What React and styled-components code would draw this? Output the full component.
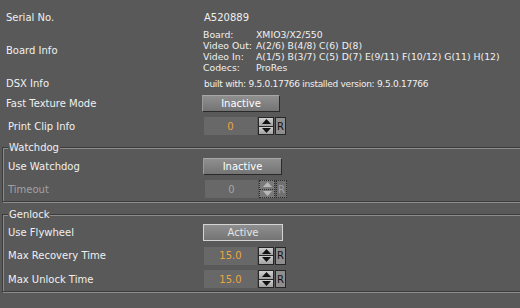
import React from 'react'
import styled, { createGlobalStyle } from 'styled-components'

const Global = createGlobalStyle`
  body {
    margin: 0;
    background: #595959;
  }
`

const Page = styled.div`
  width: 520px;
  height: 308px;
  overflow: hidden;
  background: #595959;
  font-family: "DejaVu Sans", Verdana, sans-serif;
  font-size: 10px;
  color: #f0f0f0;
  padding-top: 6px;
  box-sizing: border-box;
`

const Row = styled.div`
  display: grid;
  grid-template-columns: ${({ $labelW }) => $labelW}px auto;
  align-items: center;
  height: ${({ $h }) => $h}px;
  padding-left: ${({ $indent }) => $indent || 0}px;
`

const Label = styled.div`
  white-space: nowrap;
  color: ${({ $disabled }) => ($disabled ? '#a2a2a2' : '#f0f0f0')};
`

const Value = styled.div`
  margin-left: ${({ $ml }) => $ml || 0}px;
  font-size: ${({ $fs }) => $fs || 10}px;
  letter-spacing: ${({ $ls }) => $ls || 0}px;
  white-space: nowrap;
`

const InfoGrid = styled.div`
  display: grid;
  grid-template-columns: 53px auto;
  font-size: 9.3px;
  line-height: 11px;
  white-space: nowrap;
  margin-left: 1px;
`

const Group = styled.div`
  position: relative;
  margin-left: 2px;
  margin-top: ${({ $mt }) => $mt}px;
  width: 530px;
  box-sizing: border-box;
  border: 1px solid #3c3c3c;
  box-shadow: inset 1px 1px 0 #8c8c8c, 1px 1px 0 #8c8c8c;
  padding: ${({ $pt }) => $pt}px 0 ${({ $pb }) => $pb || 0}px 5px;
`

const GroupTitle = styled.div`
  position: absolute;
  top: -7px;
  left: 5px;
  padding: 0 1px;
  background: #595959;
  line-height: 13px;
`

const Button = styled.div`
  width: ${({ $w }) => $w}px;
  height: 17px;
  box-sizing: border-box;
  display: flex;
  align-items: center;
  justify-content: center;
  background: linear-gradient(#8f8f8f, #747474);
  border: 1px solid;
  border-color: ${({ $on }) =>
    $on ? '#d4d4d4' : '#a6a6a6 #2a2a2a #2a2a2a #9a9a9a'};
  color: ${({ $on }) => ($on ? '#e4e4e4' : '#ffffff')};
  font-size: 10px;
`

const Spin = styled.div`
  display: flex;
  align-items: stretch;
  height: 18px;
  margin-left: ${({ $ml }) => $ml}px;
`

const Field = styled.div`
  width: 53px;
  display: flex;
  align-items: center;
  justify-content: center;
  background: #686868;
  color: ${({ $disabled }) => ($disabled ? '#a6a6a6' : '#eaa53e')};
  font-size: 10px;
  margin-right: 1px;
`

const Arrows = styled.div`
  width: 16px;
  display: flex;
  flex-direction: column;
`

const Arrow = styled.div`
  flex: 1;
  display: flex;
  align-items: center;
  justify-content: center;
  box-sizing: border-box;
  background: ${({ $disabled }) =>
    $disabled ? '#7a7a7a' : 'linear-gradient(#d0d0d0, #a2a2a2)'};
  border: 1px ${({ $disabled }) => ($disabled ? 'dotted #2c2c2c' : 'solid #262626')};
  margin-top: ${({ $down }) => ($down ? '-1px' : 0)};
`

const Reset = styled.div`
  width: 11px;
  margin-left: 1px;
  box-sizing: border-box;
  display: flex;
  align-items: center;
  justify-content: center;
  background: ${({ $disabled }) => ($disabled ? '#707070' : '#8e8e8e')};
  border: 1px ${({ $disabled }) => ($disabled ? 'dotted #2c2c2c' : 'solid #262626')};
  color: ${({ $disabled }) => ($disabled ? '#a0a0a0' : '#111')};
  font-size: 10px;
`

const Tri = ({ down, color }) => (
  <svg width="9" height="5" viewBox="0 0 9 5">
    <polygon points={down ? '0,0 9,0 4.5,5' : '0,5 9,5 4.5,0'} fill={color} />
  </svg>
)

const SpinBox = ({ value, disabled, ml }) => (
  <Spin $ml={ml}>
    <Field $disabled={disabled}>{value}</Field>
    <Arrows>
      <Arrow $disabled={disabled}>
        <Tri color={disabled ? '#b8b8b8' : '#111'} />
      </Arrow>
      <Arrow $disabled={disabled} $down>
        <Tri down color={disabled ? '#b8b8b8' : '#111'} />
      </Arrow>
    </Arrows>
    <Reset $disabled={disabled}>R</Reset>
  </Spin>
)

const boardInfo = [
  ['Board:', 'XMIO3/X2/550'],
  ['Video Out:', 'A(2/6) B(4/8) C(6) D(8)'],
  ['Video In:', 'A(1/5) B(3/7) C(5) D(7) E(9/11) F(10/12) G(11) H(12)'],
  ['Codecs:', 'ProRes'],
]

export default function App() {
  return (
    <Page>
      <Global />
      <Row $labelW={196} $h={22} $indent={6}>
        <Label>Serial No.</Label>
        <Value $ml={2}>A520889</Value>
      </Row>
      <Row $labelW={196} $h={45} $indent={6}>
        <Label>Board Info</Label>
        <InfoGrid>
          {boardInfo.map(([k, v]) => (
            <React.Fragment key={k}>
              <span>{k}</span>
              <span>{v}</span>
            </React.Fragment>
          ))}
        </InfoGrid>
      </Row>
      <Row $labelW={196} $h={21} $indent={6}>
        <Label>DSX Info</Label>
        <Value $ml={2} $fs={9} $ls={-0.28}>built with: 9.5.0.17766 installed version: 9.5.0.17766</Value>
      </Row>
      <Row $labelW={196} $h={18} $indent={6}>
        <Label>Fast Texture Mode</Label>
        <Button $w={78}>Inactive</Button>
      </Row>
      <Row $labelW={194} $h={28} $indent={8}>
        <Label>Print Clip Info</Label>
        <SpinBox value="0" ml={2} />
      </Row>

      <Group $mt={7} $pt={7} $pb={1}>
        <GroupTitle>Watchdog</GroupTitle>
        <Row $labelW={195} $h={23}>
          <Label>Use Watchdog</Label>
          <Button $w={79}>Inactive</Button>
        </Row>
        <Row $labelW={195} $h={22}>
          <Label $disabled>Timeout</Label>
          <SpinBox value="0" ml={2} disabled />
        </Row>
      </Group>

      <Group $mt={12} $pt={6}>
        <GroupTitle>Genlock</GroupTitle>
        <Row $labelW={195} $h={23}>
          <Label>Use Flywheel</Label>
          <Button $w={80} $on>Active</Button>
        </Row>
        <Row $labelW={195} $h={23}>
          <Label>Max Recovery Time</Label>
          <SpinBox value="15.0" ml={1} />
        </Row>
        <Row $labelW={195} $h={24}>
          <Label>Max Unlock Time</Label>
          <SpinBox value="15.0" ml={1} />
        </Row>
      </Group>
    </Page>
  )
}
